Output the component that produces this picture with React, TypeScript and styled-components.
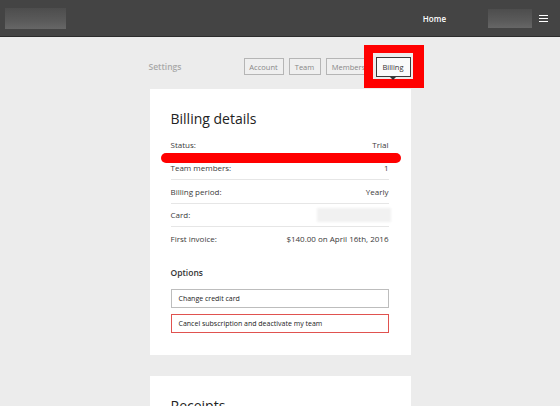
import React from "react";
import styled, { createGlobalStyle } from "styled-components";

const Global = createGlobalStyle`
  html, body { margin: 0; padding: 0; background: #ececec; }
  body { font-family: "Open Sans", "Liberation Sans", sans-serif; color: #333; }
  * { box-sizing: border-box; }
`;

const Header = styled.header`
  height: 37px;
  background: #444444;
  border-bottom: 1px solid #2c2c2c;
  display: flex;
  align-items: center;
  padding: 0 12px 0 5px;
`;

const Blur = styled.div<{ $w: number; $h: number }>`
  width: ${(p) => p.$w}px;
  height: ${(p) => p.$h}px;
  background: linear-gradient(180deg, #4d4d4d 0%, #5a5a5a 60%, #666 100%);
  filter: blur(0.6px);
`;

const Spacer = styled.div`
  flex: 1;
`;

const NavLink = styled.a`
  color: #fff;
  font-size: 8px;
  font-weight: 600;
  margin-right: 42px;
  margin-top: 1px;
`;

const Burger = styled.div`
  width: 9px;
  margin-left: 7px;
  margin-top: 1px;
  display: flex;
  flex-direction: column;
  gap: 2px;
  span {
    height: 1px;
    background: #fff;
    display: block;
  }
`;

const Main = styled.main`
  width: 261px;
  margin: 0 auto;
  padding-top: 21px;
`;

const TopRow = styled.div`
  display: flex;
  align-items: center;
  height: 17px;
  margin-bottom: 14px;
`;

const Title = styled.div`
  color: #a9a9a9;
  font-size: 8.5px;
  font-weight: 600;
  margin-left: -1px;
  flex: 1;
`;

const Tabs = styled.div`
  display: flex;
  gap: 5px;
  align-items: center;
  height: 17px;
`;

const Tab = styled.button<{ $w: number; $active?: boolean }>`
  position: relative;
  width: ${(p) => p.$w}px;
  height: ${(p) => (p.$active ? 20 : 17)}px;
  padding: 0;
  text-align: center;
  font-family: inherit;
  font-size: 7.5px;
  color: ${(p) => (p.$active ? "#333" : "#888")};
  background: ${(p) => (p.$active ? "#fafafa" : "#efefef")};
  border: 1px solid ${(p) => (p.$active ? "#3a3a3a" : "#b5b5b5")};
`;

const HighlightFrame = styled.span`
  position: relative;
  z-index: 1;
  display: inline-flex;
  border-style: solid;
  border-color: #ff0000;
  border-width: 8px 11px 9px 9px;
  padding: 4px 2px 2px 3px;
  background: #ececec;
  margin-left: -13px;
  margin-right: -13px;
`;

const Pointer = styled.span`
  position: absolute;
  left: 50%;
  bottom: -4px;
  margin-left: -3px;
  width: 0;
  height: 0;
  border-left: 3px solid transparent;
  border-right: 3px solid transparent;
  border-top: 3px solid #333;
`;

const Card = styled.section`
  position: relative;
  background: #fff;
  padding: 20px 22px 22px 21px;
  margin-bottom: 21px;
`;

const CardTitle = styled.h2`
  margin: 0 0 4px;
  font-size: 14px;
  font-weight: 400;
  line-height: 20px;
  color: #222;
`;

const Row = styled.div<{ $last?: boolean }>`
  display: flex;
  justify-content: space-between;
  align-items: center;
  height: 23.5px;
  font-size: 8px;
  color: #3a3a3a;
  border-bottom: ${(p) => (p.$last ? "none" : "1px solid #e6e6e6")};
`;

const Value = styled.span`
  color: #3a3a3a;
`;

const CardBlur = styled.div`
  width: 74px;
  height: 14px;
  background: #f1f1f1;
  filter: blur(1px);
  margin-right: -2px;
`;

const Strike = styled.div`
  position: absolute;
  left: 11px;
  width: 240px;
  top: 64px;
  height: 10px;
  border-radius: 5px;
  background: #ff0000;
`;

const Section = styled.h3`
  margin: 16px 0 11px;
  font-size: 8.5px;
  font-weight: 600;
  color: #333;
`;

const Options = styled.div`
  display: flex;
  flex-direction: column;
  gap: 6px;
`;

const OptionButton = styled.button<{ $danger?: boolean }>`
  height: 19px;
  text-align: left;
  padding: 0 7px;
  font-family: inherit;
  font-size: 7px;
  color: #222;
  background: #fff;
  border: 1px solid ${(p) => (p.$danger ? "#e0524f" : "#bdbdbd")};
`;

export default function App() {
  return (
    <>
      <Global />
      <Header>
        <Blur $w={61} $h={21} />
        <Spacer />
        <NavLink>Home</NavLink>
        <Blur $w={44} $h={19} />
        <Burger>
          <span />
          <span />
          <span />
        </Burger>
      </Header>
      <Main>
        <TopRow>
          <Title>Settings</Title>
          <Tabs>
            <Tab $w={40}>Account</Tab>
            <Tab $w={32}>Team</Tab>
            <Tab $w={46}>Members</Tab>
            <HighlightFrame>
              <Tab $w={35} $active>
                Billing
                <Pointer />
              </Tab>
            </HighlightFrame>
          </Tabs>
        </TopRow>
        <Card>
          <CardTitle>Billing details</CardTitle>
          <Row>
            <span>Status:</span>
            <Value>Trial</Value>
          </Row>
          <Row>
            <span>Team members:</span>
            <Value>1</Value>
          </Row>
          <Row>
            <span>Billing period:</span>
            <Value>Yearly</Value>
          </Row>
          <Row>
            <span>Card:</span>
            <CardBlur />
          </Row>
          <Row $last>
            <span>First invoice:</span>
            <Value>$140.00 on April 16th, 2016</Value>
          </Row>
          <Strike />
          <Section>Options</Section>
          <Options>
            <OptionButton>Change credit card</OptionButton>
            <OptionButton $danger>Cancel subscription and deactivate my team</OptionButton>
          </Options>
        </Card>
        <Card>
          <CardTitle>Receipts</CardTitle>
        </Card>
      </Main>
    </>
  );
}
